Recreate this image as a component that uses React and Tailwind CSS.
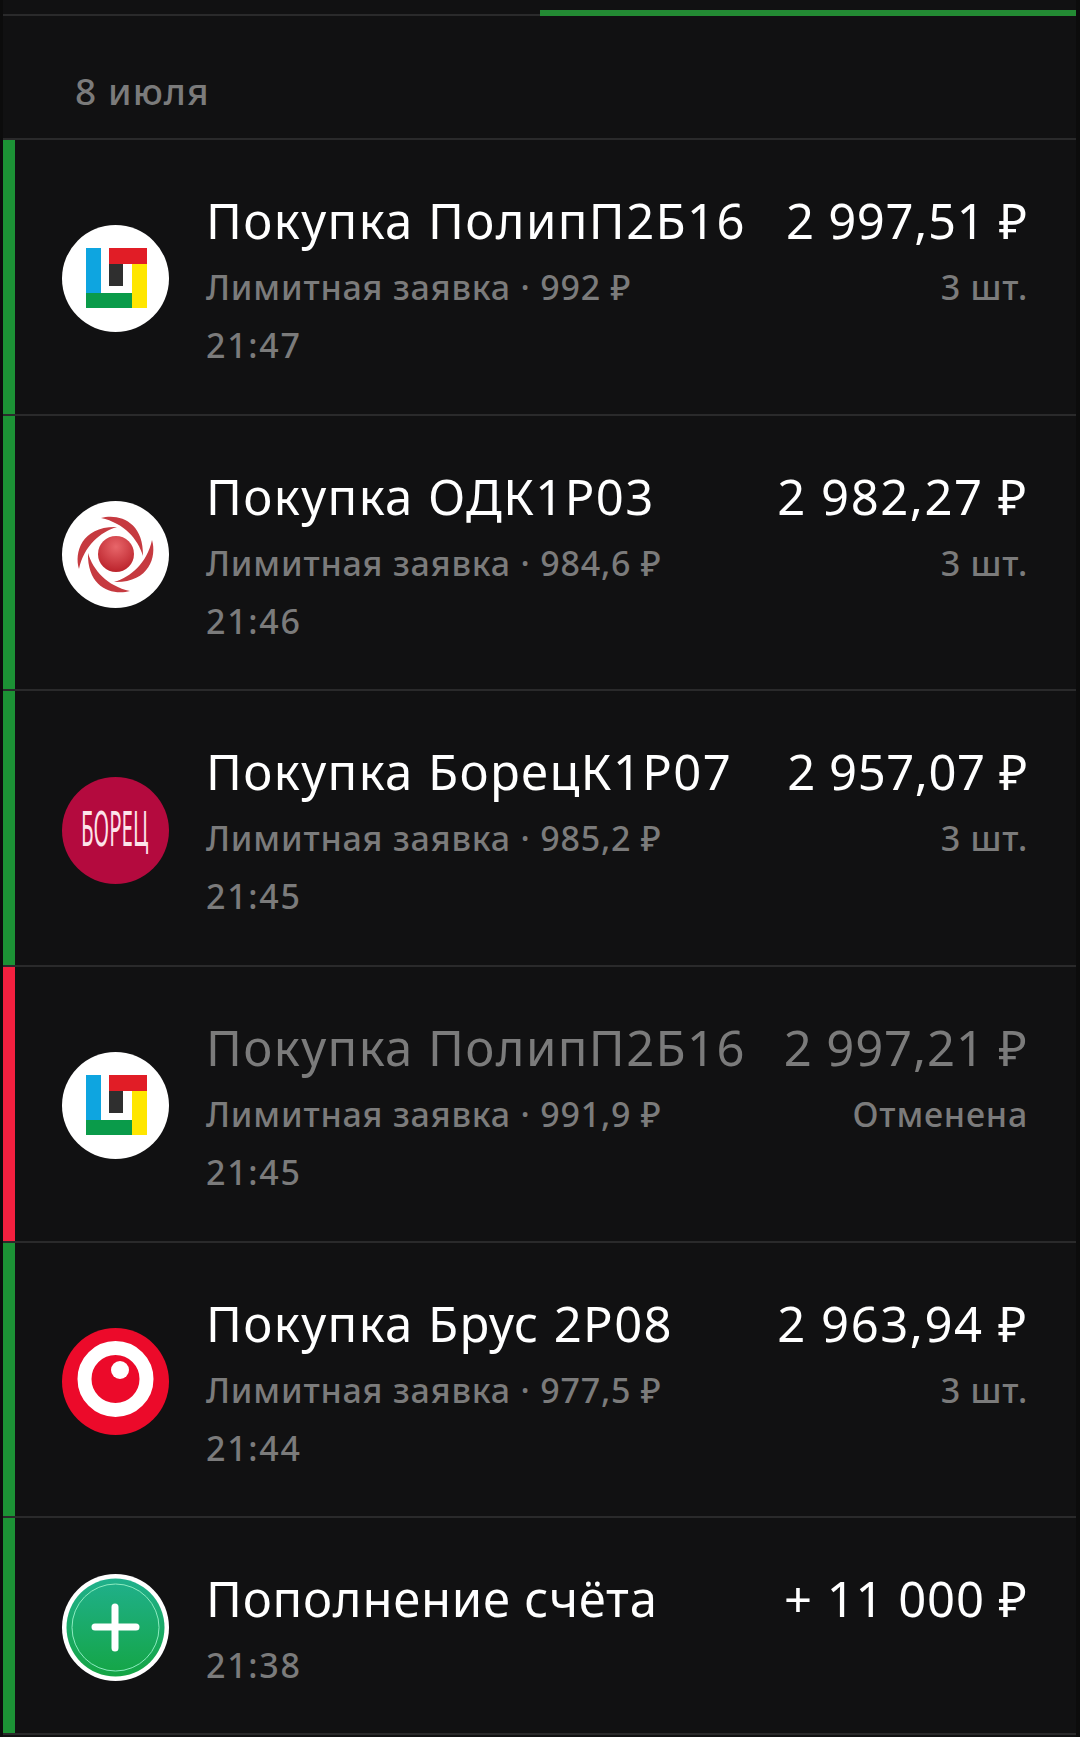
import React from "react";

const PolypLogo = () => (
  <svg viewBox="0 0 107 107" className="w-[107px] h-[107px]">
    <circle cx="53.5" cy="53.5" r="53.5" fill="#fff" />
    <rect x="24" y="23" width="15" height="60" fill="#0ea5e0" />
    <rect x="47" y="23" width="38" height="16" fill="#e11d26" />
    <rect x="47" y="39" width="14" height="22" fill="#2f2f2f" />
    <rect x="70" y="39" width="15" height="44" fill="#ffe600" />
    <rect x="24" y="68" width="46" height="15" fill="#0a9b4a" />
  </svg>
);

const OdkLogo = () => (
  <svg viewBox="0 0 107 107" className="w-[107px] h-[107px]">
    <defs>
      <radialGradient id="odkBall" cx="0.5" cy="0.3" r="0.75">
        <stop offset="0" stopColor="#e8666a" />
        <stop offset="1" stopColor="#b81e27" />
      </radialGradient>
    </defs>
    <circle cx="53.5" cy="53.5" r="53.5" fill="#fff" />
    <circle cx="54" cy="53" r="18" fill="url(#odkBall)" />
    {[0, 90, 180, 270].map((deg) => (
      <path
        key={deg}
        d="M39 17 C56 12 82 20 81 55 C76 38 62 22 39 17Z"
        fill="#c63a40"
        transform={`rotate(${deg} 53.5 53.5)`}
      />
    ))}
  </svg>
);

const BorecLogo = () => (
  <svg viewBox="0 0 107 107" className="w-[107px] h-[107px]">
    <circle cx="53.5" cy="53.5" r="53.5" fill="#b40a3e" />
    <text
      transform="translate(19 69) scale(0.41 1)"
      fontSize="50"
      fill="#fde3ea"
      className="font-['Noto_Sans',sans-serif]"
    >
      БОРЕЦ
    </text>
  </svg>
);

const BrusLogo = () => (
  <svg viewBox="0 0 107 107" className="w-[107px] h-[107px]">
    <circle cx="53.5" cy="53.5" r="53.5" fill="#ec0a2a" />
    <circle cx="53.5" cy="51" r="31" fill="none" stroke="#fff" strokeWidth="14" />
    <circle cx="58" cy="42" r="9" fill="#fff" />
  </svg>
);

const TopUpLogo = () => (
  <svg viewBox="0 0 107 107" className="w-[107px] h-[107px]">
    <defs>
      <linearGradient id="topUp" x1="0" y1="0" x2="0" y2="1">
        <stop offset="0" stopColor="#20b08c" />
        <stop offset="1" stopColor="#14a544" />
      </linearGradient>
    </defs>
    <circle cx="53.5" cy="53.5" r="53.5" fill="#fff" />
    <circle cx="53.5" cy="53.5" r="49" fill="url(#topUp)" />
    <circle cx="53.5" cy="53.5" r="43.5" fill="none" stroke="#8cebc0" strokeWidth="1" />
    <path d="M53 33 V74 M33 53 H74" stroke="#fff" strokeWidth="7" strokeLinecap="round" fill="none" />
  </svg>
);

const rows = [
  { logo: <PolypLogo />, title: "Покупка ПолипП2Б16", amount: "2 997,51 ₽", track: "tracking-[0.66px]", sub: "Лимитная заявка · 992 ₽", right: "3 шт.", time: "21:47" },
  { logo: <OdkLogo />, title: "Покупка ОДК1Р03", amount: "2 982,27 ₽", track: "tracking-[1.55px]", sub: "Лимитная заявка · 984,6 ₽", right: "3 шт.", time: "21:46" },
  { logo: <BorecLogo />, title: "Покупка БорецК1Р07", amount: "2 957,07 ₽", track: "tracking-[0.55px]", sub: "Лимитная заявка · 985,2 ₽", right: "3 шт.", time: "21:45" },
  { logo: <PolypLogo />, title: "Покупка ПолипП2Б16", amount: "2 997,21 ₽", track: "tracking-[0.9px]", sub: "Лимитная заявка · 991,9 ₽", right: "Отменена", time: "21:45", cancelled: true },
  { logo: <BrusLogo />, title: "Покупка Брус 2Р08", amount: "2 963,94 ₽", track: "tracking-[1.55px]", sub: "Лимитная заявка · 977,5 ₽", right: "3 шт.", time: "21:44" },
];

function Row({ row }) {
  const mainColor = row.cancelled ? "text-[#7b7b7b]" : "text-white";
  return (
    <div className="flex h-[275.7px] border-b-2 border-[#2a2a2b]">
      <div className={`w-[12px] shrink-0 ${row.cancelled ? "bg-[#f4203f]" : "bg-[#1c9235]"}`} />
      <div className="ml-[47px] mt-[4px] w-[107px] shrink-0 self-center">{row.logo}</div>
      <div className="ml-[37px] flex-1 pt-[51px] pr-[48px]">
        <div className={`flex justify-between text-[49px] leading-[58px] ${mainColor}`}>
          <span className="tracking-[1.4px]">{row.title}</span>
          <span className={row.track}>{row.amount}</span>
        </div>
        <div className="mt-[10px] flex justify-between text-[34px] font-medium leading-[57px] text-[#7b7b7b]">
          <span className="tracking-[0.8px]">{row.sub}</span>
          <span className="tracking-[0.8px]">{row.right}</span>
        </div>
        <div className="text-[34px] font-medium leading-[58px] tracking-[1.7px] text-[#7b7b7b]">{row.time}</div>
      </div>
    </div>
  );
}

export default function App() {
  return (
    <div className="h-[1737px] overflow-hidden bg-[#0c0c0c] pl-[3px] pr-[4px] font-['Noto_Sans',sans-serif]">
      <div className="h-full bg-[#111112]">
        <div className="flex h-[16px] items-end">
          <div className="h-[2px] w-[537px] bg-[#2a2a2b]" />
          <div className="h-[6px] flex-1 bg-[#238a33]" />
        </div>
        <div className="h-[124px] border-b-2 border-[#2a2a2b] pl-[72px] pt-[48px] text-[37px] font-medium leading-[54px] tracking-[1.1px] text-[#7b7b7b]">
          8 июля
        </div>
        {rows.map((row, i) => (
          <Row key={i} row={row} />
        ))}
        <div className="flex h-[217px] border-b-2 border-[#2a2a2b]">
          <div className="w-[12px] shrink-0 bg-[#1c9235]" />
          <div className="ml-[47px] mt-[4px] w-[107px] shrink-0 self-center">
            <TopUpLogo />
          </div>
          <div className="ml-[37px] flex-1 pt-[51px] pr-[48px]">
            <div className="flex justify-between text-[49px] leading-[58px] text-white">
              <span className="tracking-[0.76px]">Пополнение счёта</span>
              <span className="tracking-[0.9px]">+ 11 000 ₽</span>
            </div>
            <div className="mt-[10px] text-[34px] font-medium leading-[57px] tracking-[1.7px] text-[#7b7b7b]">21:38</div>
          </div>
        </div>
      </div>
    </div>
  );
}
